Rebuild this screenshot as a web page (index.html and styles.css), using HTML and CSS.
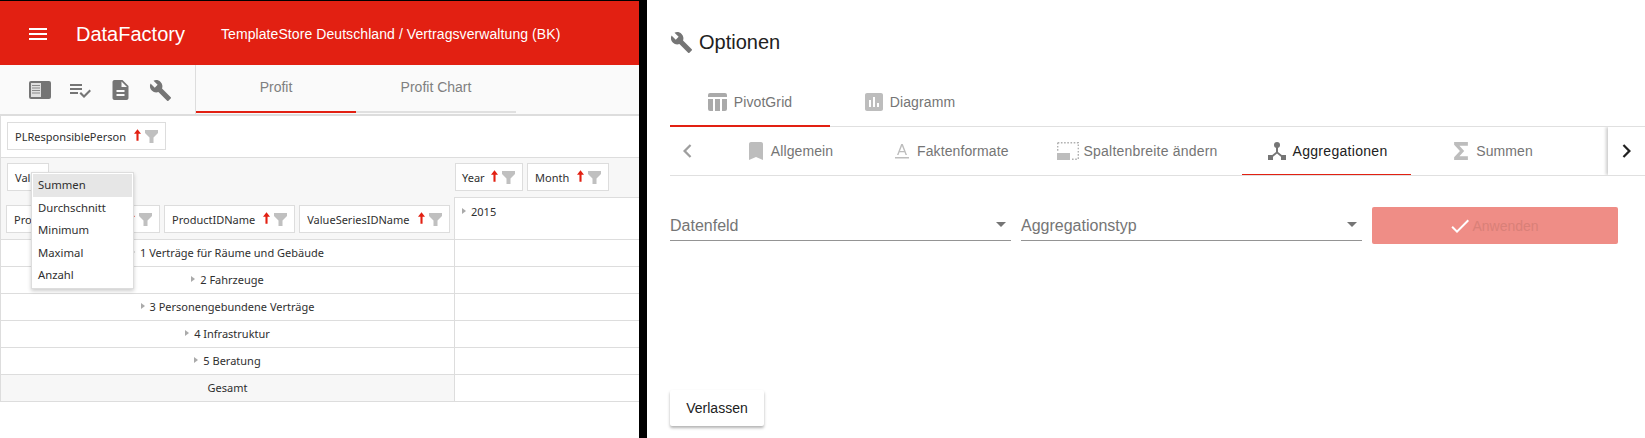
FILE: index.html
```html
<!DOCTYPE html>
<html lang="de">
<head>
  <meta charset="UTF-8" />
  <title>DataFactory</title>
  <link rel="stylesheet" href="styles.css">
</head>
<body>
  <svg class="defs" width="0" height="0">
    <symbol id="i-build" viewBox="0 0 24 24"><path d="M22.7 19l-9.1-9.1c.9-2.3.4-5-1.5-6.9-2-2-5-2.4-7.4-1.3L9 6 6 9 1.6 4.7C.4 7.1.9 10.1 2.9 12.1c1.9 1.9 4.6 2.4 6.9 1.5l9.1 9.1c.4.4 1 .4 1.4 0l2.3-2.3c.5-.4.5-1.1.1-1.4z"/></symbol>
    <symbol id="i-up" viewBox="0 0 8 13"><path d="M4 0L8 5H5.2V13H2.8V5H0z"/></symbol>
    <symbol id="i-filter" viewBox="0 0 13 13"><path d="M0 0H13V3L8.500 7.500V13H4.500V7.500L0 3z"/></symbol>
  </svg>

  <div class="left">
    <header class="topbar">
      <svg class="menu-icon" viewBox="0 0 18 12"><path d="M0 0h18v2H0zM0 5h18v2H0zM0 10h18v2H0z"/></svg>
      <span class="brand">DataFactory</span>
      <span class="crumb">TemplateStore Deutschland / Vertragsverwaltung (BK)</span>
    </header>

    <div class="toolbar">
      <div class="tools">
        <svg class="tool-panel" viewBox="0 0 22 18">
          <rect width="22" height="18" rx="2" fill="#757575"/>
          <rect x="2" y="2" width="10" height="14" fill="#e0e0e0"/>
          <path d="M3 4h8v1H3zM3 6.500h8v1H3zM3 9h8v1H3zM3 11.500h8v1H3z" fill="#8a8a8a"/>
        </svg>
        <svg class="tool-check" viewBox="2 6 21 14"><path d="M14 10H2v2h12v-2zm0-4H2v2h12V6zM2 16h8v-2H2v2zm19.500-4.500L23 13l-6.990 7-4.510-4.500L13 14l3.010 3 5.490-5.500z"/></svg>
        <svg class="tool-doc" viewBox="4 2 16 20"><path d="M14 2H6c-1.100 0-1.990.9-1.990 2L4 20c0 1.100.89 2 1.990 2H18c1.100 0 2-.9 2-2V8l-6-6zm2 16H8v-2h8v2zm0-4H8v-2h8v2zm-3-5V3.500L18.500 9H13z"/></svg>
        <svg class="tool-build"><use href="#i-build"/></svg>
      </div>
      <nav class="report-tabs">
        <a class="report-tab active">Profit</a>
        <a class="report-tab">Profit Chart</a>
      </nav>
    </div>

    <div class="pivot">
      <div class="filter-area">
        <span class="chip">PLResponsiblePerson<svg class="up"><use href="#i-up"/></svg><svg class="funnel"><use href="#i-filter"/></svg></span>
      </div>

      <div class="pivot-head">
        <div class="head-left">
          <div class="head-row data-row">
            <span class="chip chip-val">Val</span>
          </div>
          <div class="head-row row-fields">
            <span class="chip chip-pro">Pro<svg class="up"><use href="#i-up"/></svg><svg class="funnel"><use href="#i-filter"/></svg></span>
            <span class="chip">ProductIDName<svg class="up"><use href="#i-up"/></svg><svg class="funnel"><use href="#i-filter"/></svg></span>
            <span class="chip">ValueSeriesIDName<svg class="up"><use href="#i-up"/></svg><svg class="funnel"><use href="#i-filter"/></svg></span>
          </div>
        </div>
        <div class="head-right">
          <div class="col-fields">
            <span class="chip chip-year">Year<svg class="up"><use href="#i-up"/></svg><svg class="funnel"><use href="#i-filter"/></svg></span>
            <span class="chip">Month<svg class="up"><use href="#i-up"/></svg><svg class="funnel"><use href="#i-filter"/></svg></span>
          </div>
          <div class="year-cell"><span class="arrow"></span>2015</div>
        </div>
      </div>

      <div class="pivot-row"><div class="row-label"><span class="arrow"></span>1 Verträge für Räume und Gebäude</div><div class="row-value"></div></div>
      <div class="pivot-row"><div class="row-label"><span class="arrow"></span>2 Fahrzeuge</div><div class="row-value"></div></div>
      <div class="pivot-row"><div class="row-label"><span class="arrow"></span>3 Personengebundene Verträge</div><div class="row-value"></div></div>
      <div class="pivot-row"><div class="row-label"><span class="arrow"></span>4 Infrastruktur</div><div class="row-value"></div></div>
      <div class="pivot-row"><div class="row-label"><span class="arrow"></span>5 Beratung</div><div class="row-value"></div></div>
      <div class="pivot-row total"><div class="row-label">Gesamt</div><div class="row-value"></div></div>

      <ul class="summary-menu">
        <li class="selected">Summen</li>
        <li>Durchschnitt</li>
        <li>Minimum</li>
        <li>Maximal</li>
        <li>Anzahl</li>
      </ul>
    </div>
  </div>

  <div class="right">
    <h2 class="title"><svg class="title-icon"><use href="#i-build"/></svg>Optionen</h2>

    <nav class="tabs tabs-main">
      <a class="tab active-main">
        <svg class="tab-icon icon-grid" viewBox="0 0 19 18"><path d="M2 0h15a2 2 0 0 1 2 2v2H0V2a2 2 0 0 1 2-2zM0 6h5v12H2a2 2 0 0 1-2-2zM7 6h5v12H7zM14 6h5v10a2 2 0 0 1-2 2h-3z"/></svg>
        PivotGrid
      </a>
      <a class="tab">
        <svg class="tab-icon" viewBox="3 3 18 18"><path d="M19 3H5c-1.100 0-2 .9-2 2v14c0 1.100.9 2 2 2h14c1.100 0 2-.9 2-2V5c0-1.100-.9-2-2-2zM9 17H7v-7h2v7zm4 0h-2V7h2v10zm4 0h-2v-4h2v4z"/></svg>
        Diagramm
      </a>
    </nav>

    <nav class="tabs tabs-sub">
      <span class="scroll-left"><svg viewBox="8 6 8 12"><path d="M15.410 7.410L14 6l-6 6 6 6 1.410-1.410L10.830 12z"/></svg></span>
      <a class="tab">
        <svg class="tab-icon icon-narrow" viewBox="5 3 14 18"><path d="M17 3H7c-1.100 0-1.990.9-1.990 2L5 21l7-3 7 3V5c0-1.100-.9-2-2-2z"/></svg>
        Allgemein
      </a>
      <a class="tab">
        <svg class="tab-icon icon-narrow" viewBox="0 0 14 18"><path d="M0 15h14v1.500H0zM6.200 2h1.600l4.200 11h-1.500l-1-2.700H4.500l-1 2.700H2zM7 4L5 9h4z"/></svg>
        Faktenformate
      </a>
      <a class="tab tab-tight">
        <svg class="tab-icon icon-wide" viewBox="0 0 22 18"><path d="M0 11h13v7H0z"/><path d="M.7.700h20.600v16.600M15 17.300h6M.7.700v8" fill="none" stroke="#b0b0b0" stroke-width="1.400" stroke-dasharray="1.600 1.600"/></svg>
        Spaltenbreite ändern
      </a>
      <a class="tab active-sub">
        <svg class="tab-icon" viewBox="0 0 18 18"><circle cx="9" cy="3" r="3"/><path d="M8 5h2v5l5 4-1.200 1.500L9 11.500l-4.800 4L3 14l5-4z"/><path d="M0 13h5v5H0zM13 13h5v5h-5z"/></svg>
        Aggregationen
      </a>
      <a class="tab tab-last">
        <svg class="tab-icon icon-narrow" viewBox="0 0 13 17"><path d="M0 0h13v3.500H5l4.500 5-4.500 5h8V17H0v-2.500L5.500 8.500 0 2.500z"/></svg>
        Summen
      </a>
      <span class="scroll-right"><svg viewBox="8 6 8 12"><path d="M10 6L8.590 7.410 13.170 12l-4.580 4.590L10 18l6-6z"/></svg></span>
    </nav>

    <div class="fields">
      <div class="select">Datenfeld<span class="caret"></span></div>
      <div class="select">Aggregationstyp<span class="caret"></span></div>
      <button class="apply" disabled>
        <svg viewBox="3 5 18 14"><path d="M9 16.170L4.830 12l-1.420 1.410L9 19 21 7l-1.410-1.410z"/></svg>
        Anwenden
      </button>
    </div>

    <button class="leave">Verlassen</button>
  </div>
</body>
</html>
```

FILE: styles.css
```css
* {
  box-sizing: border-box;
}
html, body {
  height: 100%;
}
body {
  margin: 0;
  display: flex;
  overflow: hidden;
  background: #000;
  font-family: "Liberation Sans", Arial, sans-serif;
}
.defs {
  position: absolute;
}

/* left window */
.left {
  position: relative;
  width: 639px;
  margin-top: 1px;
  background: #fff;
  overflow: hidden;
}
.topbar {
  height: 64px;
  display: flex;
  align-items: center;
  padding: 2px 0 0 29px;
  background: #e22012;
  color: #fff;
}
.menu-icon {
  width: 18px;
  height: 12px;
  margin-right: 29px;
  fill: #fff;
}
.brand {
  font-size: 20px;
  margin-right: 36px;
}
.crumb {
  font-size: 14px;
  letter-spacing: 0.08px;
}
.toolbar {
  height: 51px;
  display: flex;
  background: #fafafa;
  border-bottom: 2px solid #ddd;
}
.tools {
  width: 196px;
  display: flex;
  align-items: center;
  border-right: 1px solid #ddd;
  padding-left: 29px;
  fill: #757575;
}
.tool-panel {
  width: 22px;
  height: 18px;
  margin-right: 19px;
}
.tool-check {
  width: 21px;
  height: 14px;
  margin-right: 21px;
  margin-top: 3px;
}
.tool-doc {
  width: 17px;
  height: 20px;
  margin-right: 20px;
  margin-top: 1px;
}
.tool-build {
  width: 23px;
  height: 23px;
  margin-top: 1px;
}
.report-tabs {
  display: flex;
  height: 48px;
}
.report-tab {
  width: 160px;
  display: flex;
  align-items: center;
  justify-content: center;
  font-size: 14px;
  color: #808080;
  border-bottom: 2px solid #e0e0e0;
  padding-bottom: 2px;
}
.report-tab.active {
  border-bottom-color: #e22012;
}

/* pivot grid */
.pivot {
  font-family: "Noto Sans", "Open Sans", sans-serif;
  font-size: 11px;
  color: #2f2f2f;
}
.chip {
  height: 28px;
  flex-shrink: 0;
  display: inline-flex;
  align-items: center;
  padding: 0 7px;
  background: #fff;
  border: 1px solid #ddd;
  white-space: nowrap;
}
.up {
  width: 7px;
  height: 12px;
  margin: 0 4px 2px 8px;
  fill: #e22012;
}
.funnel {
  width: 13px;
  height: 13px;
  fill: #c0c0c0;
}
.filter-area {
  height: 42px;
  padding: 6px 6px 0;
  border-left: 1px solid #ddd;
  border-bottom: 1px solid #ddd;
}
.pivot-head {
  height: 82px;
  display: flex;
  background: #f7f7f7;
  border-left: 1px solid #ddd;
  border-bottom: 1px solid #ddd;
}
.head-left {
  width: 454px;
  flex-shrink: 0;
  padding: 5px 0 0 5px;
}
.data-row {
  height: 42px;
  padding-left: 1px;
}
.row-fields {
  display: flex;
  gap: 4px;
}
.chip-val {
  width: 42px;
}
.chip-pro {
  width: 154px;
}
.chip-pro .up {
  margin-left: auto;
}
.chip-year {
  width: 68px;
  padding: 0 6px;
}
.chip-year .up {
  margin-left: 6px;
}
.head-right {
  flex: 1;
  display: flex;
  flex-direction: column;
}
.col-fields {
  height: 39px;
  display: flex;
  gap: 4px;
  padding-top: 5px;
}
.year-cell {
  flex: 1;
  margin-left: -1px;
  padding: 6px 0 0 7px;
  background: #fff;
  border-left: 1px solid #ddd;
  border-top: 1px solid #ddd;
}
.arrow {
  display: inline-block;
  margin-right: 5px;
  vertical-align: 2px;
  border-left: 4px solid #aaa;
  border-top: 3px solid transparent;
  border-bottom: 3px solid transparent;
}
.pivot-row {
  height: 27px;
  display: flex;
  border-left: 1px solid #ddd;
  border-bottom: 1px solid #ddd;
}
.row-label {
  width: 454px;
  line-height: 26px;
  text-align: center;
  border-right: 1px solid #ddd;
}
.row-value {
  flex: 1;
}
.pivot-row.total {
  background: #f7f7f7;
}
.total .row-value {
  background: #fff;
}
.summary-menu {
  position: absolute;
  left: 31px;
  top: 171px;
  width: 103px;
  height: 117px;
  margin: 0;
  padding: 1px;
  list-style: none;
  font-size: 11.300px;
  background: #fff;
  border: 1px solid #ddd;
  box-shadow: 0 2px 4px rgba(0,0,0,0.2);
}
.summary-menu li {
  height: 22.600px;
  line-height: 22px;
  padding-left: 5px;
}
.summary-menu li.selected {
  background: #e6e6e6;
}

/* options window */
.right {
  flex: 1;
  margin-left: 8px;
  padding-left: 23px;
  display: flex;
  flex-direction: column;
  background: #fff;
}
.title {
  height: 78px;
  margin: 0;
  padding-top: 30px;
  display: flex;
  align-items: flex-start;
  font-size: 20px;
  font-weight: normal;
  line-height: 24px;
  color: #212121;
}
.title-icon {
  width: 23px;
  height: 23px;
  margin: 1px 6px 0 0;
  fill: #757575;
}
.tabs {
  display: flex;
  height: 49px;
  border-bottom: 1px solid #e0e0e0;
}
.tab {
  min-width: 160px;
  padding: 0 24px;
  display: flex;
  align-items: center;
  justify-content: center;
  gap: 7px;
  font-size: 14px;
  color: #757575;
  border-bottom: 2px solid transparent;
  margin-bottom: -1px;
  white-space: nowrap;
  letter-spacing: 0.1px;
}
.tab-icon {
  height: 18px;
  width: 18px;
  flex-shrink: 0;
  fill: #bdbdbd;
}
.icon-grid {
  width: 19px;
  fill: #aaa;
}
.icon-narrow {
  width: 14px;
  margin-right: 1px;
}
.icon-wide {
  width: 22px;
}
.tab-tight {
  gap: 5px;
  letter-spacing: 0.2px;
}
.tab-last {
  padding-left: 30px;
}
.tab.active-main {
  border-bottom-color: #e22012;
}
.tab.active-sub {
  color: #212121;
  border-bottom-color: #e22012;
  letter-spacing: 0.3px;
  padding: 0 23px 0 26px;
}
.active-sub .tab-icon {
  fill: #757575;
}
.tabs-sub {
  position: relative;
  overflow: hidden;
}
.scroll-left {
  width: 41px;
  flex-shrink: 0;
  display: flex;
  align-items: center;
  padding-left: 13px;
}
.scroll-left svg {
  width: 9px;
  height: 14px;
  fill: #9e9e9e;
}
.scroll-right {
  position: absolute;
  right: 0;
  top: 0;
  bottom: 0;
  width: 37px;
  display: flex;
  align-items: center;
  padding-left: 14px;
  background: #fff;
  box-shadow: -2px 0 3px rgba(0,0,0,0.2);
}
.scroll-right svg {
  width: 9px;
  height: 14px;
  fill: #212121;
}
.fields {
  margin-top: 31px;
  margin-right: 27px;
  display: flex;
  gap: 10px;
}
.select {
  position: relative;
  width: 341px;
  height: 34px;
  padding-top: 10px;
  font-size: 16px;
  line-height: 18px;
  color: #757575;
  border-bottom: 1px solid #949494;
}
.caret {
  position: absolute;
  right: 5px;
  top: 15px;
  border-top: 5px solid #757575;
  border-left: 5px solid transparent;
  border-right: 5px solid transparent;
}
.apply {
  flex: 1;
  height: 37px;
  display: flex;
  align-items: center;
  justify-content: center;
  gap: 3px;
  padding: 0;
  font-family: inherit;
  font-size: 14px;
  color: #d98078;
  background: #ef8d86;
  border: none;
  border-radius: 2px;
}
.apply svg {
  width: 18px;
  height: 14px;
  fill: #fff;
}
.leave {
  margin-top: auto;
  margin-bottom: 12px;
  width: 94px;
  height: 36px;
  padding: 0;
  font-family: inherit;
  font-size: 14px;
  color: #212121;
  background: #fff;
  border: none;
  border-radius: 2px;
  box-shadow: 0 2px 3px rgba(0,0,0,0.3);
}
```
